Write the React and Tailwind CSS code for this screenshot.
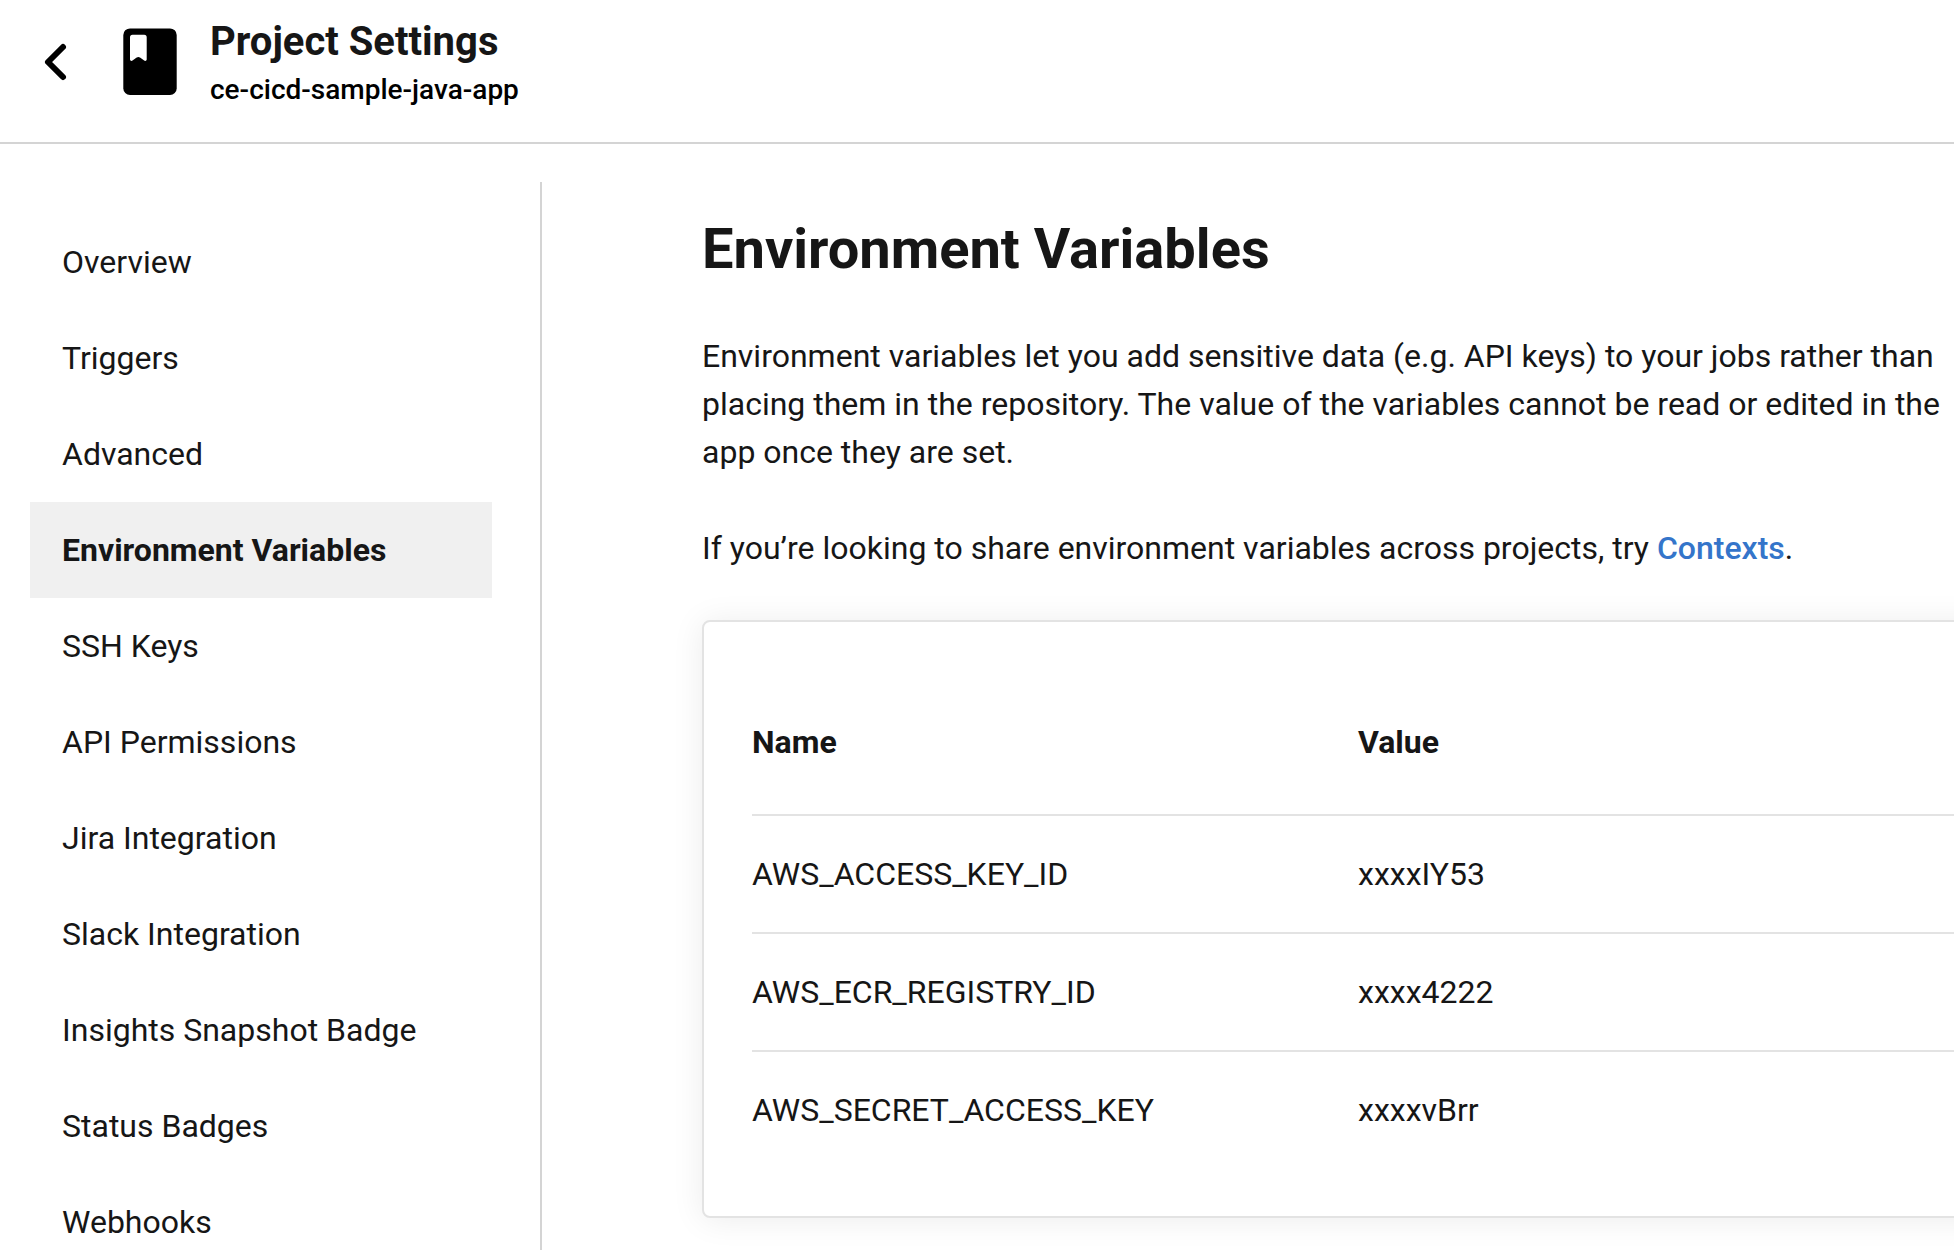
const navItems = [
  'Overview',
  'Triggers',
  'Advanced',
  'Environment Variables',
  'SSH Keys',
  'API Permissions',
  'Jira Integration',
  'Slack Integration',
  'Insights Snapshot Badge',
  'Status Badges',
  'Webhooks',
];

const variables = [
  { name: 'AWS_ACCESS_KEY_ID', value: 'xxxxIY53' },
  { name: 'AWS_ECR_REGISTRY_ID', value: 'xxxx4222' },
  { name: 'AWS_SECRET_ACCESS_KEY', value: 'xxxxvBrr' },
];

function BackIcon() {
  return (
    <svg width="30" height="44" viewBox="0 0 30 44" fill="none" aria-hidden="true">
      <path d="M23 7 8 22l15 15" stroke="#000" strokeWidth="6" strokeLinecap="round" strokeLinejoin="round" />
    </svg>
  );
}

function ProjectIcon() {
  return (
    <svg width="54" height="68" viewBox="0 0 54 68" aria-hidden="true">
      <rect x="0.3" y="0.4" width="53.4" height="66.6" rx="6.7" fill="#000" />
      <path
        d="M9.500 6.700h11.700a2.500 2.500 0 0 1 2.500 2.500v22.300a1.500 1.500 0 0 1-2.500 1.100l-4.200-3.100a2.800 2.800 0 0 0-3.300 0l-4.200 3.100A1.500 1.500 0 0 1 7 31.500V9.200a2.500 2.500 0 0 1 2.500-2.500z"
        fill="#fff"
      />
    </svg>
  );
}

function Header() {
  return (
    <header className="flex items-start border-b-2 border-[#d4d4d4] pb-[30px] pl-10 pt-4">
      <a href="#back" aria-label="Back" className="mt-6">
        <BackIcon />
      </a>
      <div className="ml-[53px] mt-3">
        <ProjectIcon />
      </div>
      <div className="ml-[33px] text-black">
        <h2 className="text-[40px] font-bold leading-[52px] text-[#161616]">Project Settings</h2>
        <p className="text-[28px] font-medium leading-[44px]">ce-cicd-sample-java-app</p>
      </div>
    </header>
  );
}

function SideNav() {
  return (
    <nav aria-label="Project settings" className="mt-[38px] shrink-0 border-r-2 border-[#d4d4d4] pl-[30px] pr-12 pt-8">
      <ul className="w-[462px]">
        {navItems.map((item) => {
          const active = item === 'Environment Variables';
          return (
            <li key={item}>
              <a
                href="#settings"
                aria-current={active ? 'page' : undefined}
                className={active ? 'block bg-[#f0f0f0] px-8 py-6 font-bold' : 'block px-8 py-6'}
              >
                {item}
              </a>
            </li>
          );
        })}
      </ul>
    </nav>
  );
}

function VariablesTable() {
  return (
    <div className="-mr-16 mt-12 rounded-lg border-2 border-[#e3e3e3] bg-white p-12 shadow-[0_2px_32px_rgba(0,0,0,0.08)]">
      <table className="w-full table-fixed text-left">
        <thead>
          <tr className="border-b-2 border-[#e3e3e3]">
            <th scope="col" className="w-[606px] py-12 font-bold">Name</th>
            <th scope="col" className="py-12 font-bold">Value</th>
          </tr>
        </thead>
        <tbody>
          {variables.map(({ name, value }) => (
            <tr key={name} className="border-b-2 border-[#e3e3e3] last:border-b-0">
              <td className="py-[34px]">{name}</td>
              <td className="py-[34px]">{value}</td>
            </tr>
          ))}
        </tbody>
      </table>
    </div>
  );
}

export default function App() {
  return (
    <div className="flex min-h-screen flex-col overflow-x-hidden bg-white font-['Roboto',sans-serif] text-[32px] leading-[48px] text-[#161616]">
      <Header />
      <div className="flex grow">
        <SideNav />
        <main className="min-w-0 grow pb-12 pl-40 pt-[70px]">
          <h1 className="text-[56px] font-bold leading-[70px]">Environment Variables</h1>
          <p className="mt-12">
            Environment variables let you add sensitive data (e.g. API keys) to your jobs rather than placing them in
            the repository. The value of the variables cannot be read or edited in the app once they are set.
          </p>
          <p className="mt-12">
            If you’re looking to share environment variables across projects, try{' '}
            <a href="#contexts" className="font-medium text-[#3475ca]">Contexts</a>.
          </p>
          <VariablesTable />
        </main>
      </div>
    </div>
  );
}
